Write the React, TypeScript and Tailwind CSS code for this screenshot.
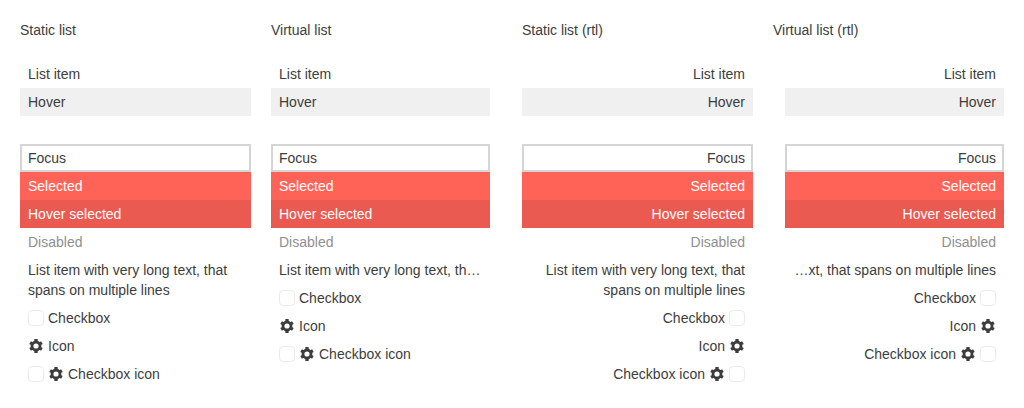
import React from 'react';
import clsx from 'clsx';

function Gear() {
  return (
    <svg viewBox="0 0 16 16" className="h-4 w-4 shrink-0" fill="none" stroke="currentColor">
      <circle cx="8" cy="8" r="4" strokeWidth="2.8" />
      <path
        strokeWidth="3.3"
        d="M8 1v2.8M8 12.2V15M2.1 4.6l2.26 1.3M11.64 10.1l2.26 1.3M2.1 11.4l2.26-1.3M11.64 5.9l2.26-1.3"
      />
    </svg>
  );
}

function Checkbox() {
  return <span className="h-4 w-4 shrink-0 rounded border border-[#ebebeb] bg-white" />;
}

type RowProps = {
  text?: string;
  className?: string;
  checkbox?: boolean;
  icon?: boolean;
  truncate?: boolean;
};

function Row({ text, className, checkbox, icon, truncate }: RowProps) {
  return (
    <li className={clsx('flex min-h-7 items-center gap-1 px-2 py-1', className)}>
      {checkbox && <Checkbox />}
      {icon && <Gear />}
      <span className={clsx('min-w-0', truncate && 'truncate')}>{text}</span>
    </li>
  );
}

function List({ title, virtual, rtl }: { title: string; virtual?: boolean; rtl?: boolean }) {
  return (
    <section>
      <h2 className="mb-5">{title}</h2>
      <ul dir={rtl ? 'rtl' : 'ltr'} className={clsx(virtual && 'pe-3')}>
        <Row text="List item" />
        <Row text="Hover" className="bg-[#f0f0f0]" />
        <Row />
        <Row text="Focus" className="shadow-[inset_0_0_0_2px_#d5d5d5]" />
        <Row text="Selected" className="bg-[#ff6358] text-white" />
        <Row text="Hover selected" className="bg-[#ea5a51] text-white" />
        <Row text="Disabled" className="text-[#8f8f8f]" />
        <Row text="List item with very long text, that spans on multiple lines" truncate={virtual} />
        <Row text="Checkbox" checkbox />
        <Row text="Icon" icon />
        <Row text="Checkbox icon" checkbox icon />
      </ul>
    </section>
  );
}

export default function App() {
  return (
    <main className="grid h-[408px] grid-cols-4 gap-5 overflow-hidden bg-white p-5 font-['Liberation_Sans',Arial,sans-serif] text-sm/5 text-[#3d3d3d] antialiased">
      <List title="Static list" />
      <List title="Virtual list" virtual />
      <List title="Static list (rtl)" rtl />
      <List title="Virtual list (rtl)" virtual rtl />
    </main>
  );
}
